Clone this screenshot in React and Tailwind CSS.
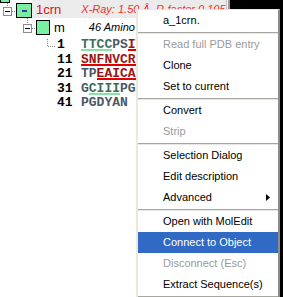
const SEQ = [
  { n: '1', parts: [['TTCC', 'strand'], ['PS', 'coil'], ['IVAR', 'helix']] },
  { n: '11', parts: [['SNFNVCRLPG', 'helix']] },
  { n: '21', parts: [['TP', 'coil'], ['EAICATYT', 'helix']] },
  { n: '31', parts: [['G', 'coil'], ['CIII', 'strand'], ['PGATC', 'coil']] },
  { n: '41', parts: [['PGDYAN', 'coil']] },
]

const partClass = {
  helix: 'text-[#9a1414] border-[#e30000]',
  strand: 'text-[#3c6e58] border-[#86e2a6]',
  coil: 'text-[#4a5868] border-transparent',
}

const MENU = [
  { label: 'a_1crn.' },
  'sep',
  { label: 'Read full PDB entry', disabled: true },
  { label: 'Clone' },
  { label: 'Set to current' },
  'sep',
  { label: 'Convert' },
  { label: 'Strip', disabled: true },
  'sep',
  { label: 'Selection Dialog' },
  { label: 'Edit description' },
  { label: 'Advanced', sub: true },
  'sep',
  { label: 'Open with MolEdit' },
  { label: 'Connect to Object', active: true },
  { label: 'Disconnect (Esc)', disabled: true },
  { label: 'Extract Sequence(s)' },
  'sep',
]

function Expander({ x, y }) {
  return (
    <g shapeRendering="crispEdges">
      <rect x={x + 0.5} y={y + 0.5} width="8" height="8" fill="#fff" stroke="#8c8c8c" />
      <line x1={x + 2} y1={y + 4.5} x2={x + 7} y2={y + 4.5} stroke="#000" />
    </g>
  )
}

export default function App() {
  return (
    <div className="relative w-[283px] h-[297px] overflow-hidden bg-black font-['Liberation_Sans',sans-serif]">
      <div className="flex h-full w-[230px] bg-white">
        <div className="flex-1 flex flex-col">

          {/* structure node */}
          <div className="flex h-[18px] items-start">
            <svg width="16" height="18" className="shrink-0">
              <rect x="0" y="-10" width="9.5" height="12.5" fill="#78f0a2" stroke="#000" shapeRendering="crispEdges" />
              <line x1="7.5" y1="3" x2="7.5" y2="7" stroke="#808080" strokeDasharray="1 1" shapeRendering="crispEdges" />
              <Expander x={3} y={7} />
              <line x1="12" y1="11.5" x2="16" y2="11.5" stroke="#808080" strokeDasharray="1 1" shapeRendering="crispEdges" />
            </svg>
            <div className="mt-[3px] w-[16px] h-[15px] shrink-0 border border-black bg-[#78f0a2] flex items-center justify-center">
              <span className="block w-[5px] h-[2px] bg-[#3b3b9e]" />
            </div>
            <div className="flex-1 h-[18px] bg-[#ebebeb] flex items-center pl-[4px] whitespace-nowrap overflow-hidden">
              <span className="text-[13px] text-[#e01010] leading-none">1crn</span>
              <span className="ml-[20px] text-[11px] italic text-[#f03030] leading-none">X-Ray: 1.50 Å, R-factor 0.105</span>
            </div>
          </div>

          {/* molecule node */}
          <div className="flex h-[18px] items-start whitespace-nowrap">
            <svg width="36" height="18" className="shrink-0">
              <line x1="27.5" y1="0" x2="27.5" y2="6" stroke="#808080" strokeDasharray="1 1" shapeRendering="crispEdges" />
              <Expander x={23} y={6} />
              <line x1="32" y1="10.5" x2="36" y2="10.5" stroke="#808080" strokeDasharray="1 1" shapeRendering="crispEdges" />
            </svg>
            <div className="mt-[2px] w-[14px] h-[15px] shrink-0 border border-black bg-[#78f0a2]" />
            <span className="ml-[4px] mt-[2px] text-[13px] leading-[15px] text-black">m</span>
            <span className="ml-[24px] mt-[3px] text-[11px] leading-[13px] italic text-black">46 Amino acids</span>
          </div>

          {/* sequence */}
          {SEQ.map((row, i) => (
            <div key={row.n} className="flex h-[14.5px] items-start pt-[4px] whitespace-nowrap font-['Liberation_Mono',monospace] font-bold text-[13px]">
              <div className="relative w-[57px] shrink-0 self-stretch">
                {i === 0 && (
                  <svg width="57" height="14" className="absolute left-0 top-[-5px]">
                    <line x1="47.5" y1="4" x2="47.5" y2="12" stroke="#808080" strokeDasharray="1 1" shapeRendering="crispEdges" />
                    <line x1="48" y1="11.5" x2="55" y2="11.5" stroke="#808080" strokeDasharray="1 1" shapeRendering="crispEdges" />
                  </svg>
                )}
              </div>
              <span className="w-[24px] shrink-0 leading-[9px] text-black">{row.n}</span>
              <div className="flex">
                {row.parts.map(([s, kind], j) => (
                  <span key={j} className={`inline-block leading-[9px] border-b-2 ${partClass[kind]}`}>{s}</span>
                ))}
              </div>
            </div>
          ))}
        </div>
        <div className="w-[10px] h-full border-l border-[#c8c8c8] bg-[#f3f2ec] border-r-2 border-r-[#9a9a9a]" />
      </div>

      {/* context menu */}
      <div className="absolute left-[136px] top-[9px] w-[144px] h-[300px] bg-white border-l-2 border-t border-l-[#ece9d8] border-t-[#ece9d8] border-r-2 border-r-[#8c8c8c] text-[11px]">
        {MENU.map((item, i) =>
          item === 'sep' ? (
            <div key={i} className="h-[3px] flex items-center">
              <div className="w-full h-[2px] border-t border-[#a7a6a0] border-b border-b-[#e6e6e6]" />
            </div>
          ) : (
            <div
              key={i}
              className={`h-[21px] flex items-center pl-[25px] pr-[8px] whitespace-nowrap ${item.active ? 'bg-[#316ac5] text-white' : item.disabled ? 'text-[#9a9a9a]' : 'text-black'}`}
            >
              <span className="flex-1">{item.label}</span>
              {item.sub && (
                <svg width="4" height="7" viewBox="0 0 4 7"><path d="M0 0 L4 3.5 L0 7 Z" fill="#000" /></svg>
              )}
            </div>
          )
        )}
      </div>
    </div>
  )
}
